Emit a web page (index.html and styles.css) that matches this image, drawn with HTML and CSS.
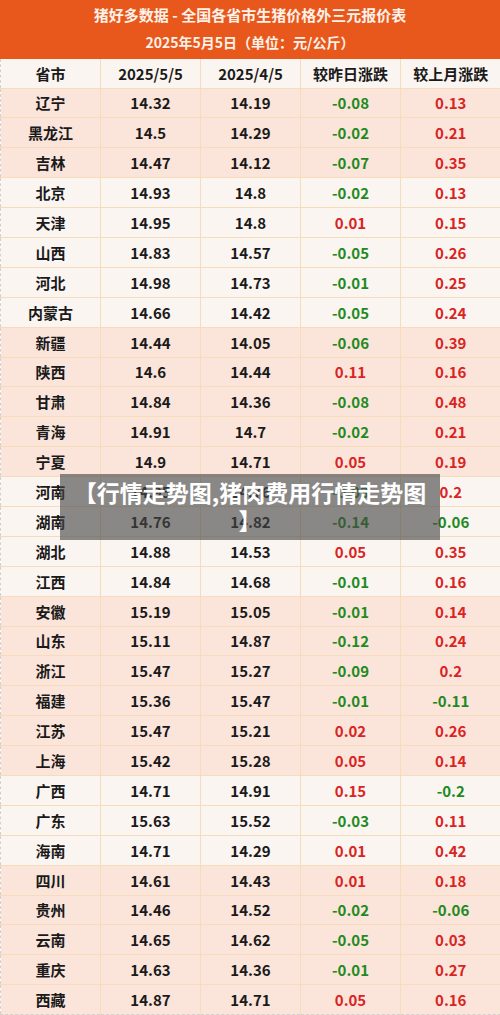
FILE: index.html
```
<!DOCTYPE html>
<html>
<head>
	<title>猪好多数据 - 全国各省市生猪价格外三元报价表</title>
	<meta charset="utf-8">
	<link rel="stylesheet" href="styles.css">
</head>
<body>
	<div class="page">
		<div class="banner">
			<p class="title">猪好多数据 - 全国各省市生猪价格外三元报价表</p>
			<p class="sub">2025年5月5日（单位：元/公斤）</p>
		</div>
		<table class="price">
			<thead>
				<tr><th>省市</th><th>2025/5/5</th><th>2025/4/5</th><th>较昨日涨跌</th><th>较上月涨跌</th></tr>
			</thead>
			<tbody>
				<tr class="pink"><td>辽宁</td><td>14.32</td><td>14.19</td><td class="down">-0.08</td><td class="up">0.13</td></tr>
				<tr class="pink"><td>黑龙江</td><td>14.5</td><td>14.29</td><td class="down">-0.02</td><td class="up">0.21</td></tr>
				<tr class="pink"><td>吉林</td><td>14.47</td><td>14.12</td><td class="down">-0.07</td><td class="up">0.35</td></tr>
				<tr class="pale"><td>北京</td><td>14.93</td><td>14.8</td><td class="down">-0.02</td><td class="up">0.13</td></tr>
				<tr class="pale"><td>天津</td><td>14.95</td><td>14.8</td><td class="up">0.01</td><td class="up">0.15</td></tr>
				<tr class="pale"><td>山西</td><td>14.83</td><td>14.57</td><td class="down">-0.05</td><td class="up">0.26</td></tr>
				<tr class="pale"><td>河北</td><td>14.98</td><td>14.73</td><td class="down">-0.01</td><td class="up">0.25</td></tr>
				<tr class="pale"><td>内蒙古</td><td>14.66</td><td>14.42</td><td class="down">-0.05</td><td class="up">0.24</td></tr>
				<tr class="pink"><td>新疆</td><td>14.44</td><td>14.05</td><td class="down">-0.06</td><td class="up">0.39</td></tr>
				<tr class="pink"><td>陕西</td><td>14.6</td><td>14.44</td><td class="up">0.11</td><td class="up">0.16</td></tr>
				<tr class="pink"><td>甘肃</td><td>14.84</td><td>14.36</td><td class="down">-0.08</td><td class="up">0.48</td></tr>
				<tr class="pink"><td>青海</td><td>14.91</td><td>14.7</td><td class="down">-0.02</td><td class="up">0.21</td></tr>
				<tr class="pink"><td>宁夏</td><td>14.9</td><td>14.71</td><td class="up">0.05</td><td class="up">0.19</td></tr>
				<tr class="pale"><td>河南</td><td>14.95</td><td>14.76</td><td class="down">-0.03</td><td class="up">0.2</td></tr>
				<tr class="pale"><td>湖南</td><td>14.76</td><td>14.82</td><td class="down">-0.14</td><td class="down">-0.06</td></tr>
				<tr class="pale"><td>湖北</td><td>14.88</td><td>14.53</td><td class="up">0.05</td><td class="up">0.35</td></tr>
				<tr class="pale"><td>江西</td><td>14.84</td><td>14.68</td><td class="down">-0.01</td><td class="up">0.16</td></tr>
				<tr class="pink"><td>安徽</td><td>15.19</td><td>15.05</td><td class="down">-0.01</td><td class="up">0.14</td></tr>
				<tr class="pink"><td>山东</td><td>15.11</td><td>14.87</td><td class="down">-0.12</td><td class="up">0.24</td></tr>
				<tr class="pink"><td>浙江</td><td>15.47</td><td>15.27</td><td class="down">-0.09</td><td class="up">0.2</td></tr>
				<tr class="pink"><td>福建</td><td>15.36</td><td>15.47</td><td class="down">-0.01</td><td class="down">-0.11</td></tr>
				<tr class="pink"><td>江苏</td><td>15.47</td><td>15.21</td><td class="up">0.02</td><td class="up">0.26</td></tr>
				<tr class="pink"><td>上海</td><td>15.42</td><td>15.28</td><td class="up">0.05</td><td class="up">0.14</td></tr>
				<tr class="pale"><td>广西</td><td>14.71</td><td>14.91</td><td class="up">0.15</td><td class="down">-0.2</td></tr>
				<tr class="pale"><td>广东</td><td>15.63</td><td>15.52</td><td class="down">-0.03</td><td class="up">0.11</td></tr>
				<tr class="pale"><td>海南</td><td>14.71</td><td>14.29</td><td class="up">0.01</td><td class="up">0.42</td></tr>
				<tr class="pink"><td>四川</td><td>14.61</td><td>14.43</td><td class="up">0.01</td><td class="up">0.18</td></tr>
				<tr class="pink"><td>贵州</td><td>14.46</td><td>14.52</td><td class="down">-0.02</td><td class="down">-0.06</td></tr>
				<tr class="pink"><td>云南</td><td>14.65</td><td>14.62</td><td class="down">-0.05</td><td class="up">0.03</td></tr>
				<tr class="pink"><td>重庆</td><td>14.63</td><td>14.36</td><td class="down">-0.01</td><td class="up">0.27</td></tr>
				<tr class="pink"><td>西藏</td><td>14.87</td><td>14.71</td><td class="up">0.05</td><td class="up">0.16</td></tr>
			</tbody>
		</table>
		<!--图片标题-->
		<div class="caption">【行情走势图,猪肉费用行情走势图<br>】</div>
	</div>
</body>
</html>
```

FILE: styles.css
```
*{
	margin:0;
	padding:0;
	box-sizing:border-box;
}
body{
	background:#fff;
	font-family:"Noto Sans CJK SC","Noto Sans",sans-serif;
	color:#1a1a1a;
}
.page{
	position:relative;
	width:500px;
	height:1015px;
	overflow:hidden;
}
.banner{
	height:59px;
	background:#e8581c;
	color:#fdf1e8;
	font-weight:700;
	text-align:center;
	display:flex;
	flex-direction:column;
	justify-content:space-around;
	padding:2px 0 4px;
}
.banner .title{
	font-size:15px;
	line-height:20px;
}
.banner .sub{
	font-size:14px;
	line-height:20px;
}
.price{
	width:100%;
	border-collapse:collapse;
	table-layout:fixed;
	border-left:1px dashed #d6d0cc;
}
.price th,
.price td{
	width:100px;
	text-align:center;
	font-size:15px;
	font-weight:700;
	border-right:1px solid #f6dcb8;
	border-bottom:1px solid #f6dcb8;
	padding:0;
}
.price th{
	height:29px;
	background:#faf5f0;
}
.price td{
	height:29.9px;
}
.price tr:last-child td{
	border-bottom:1px dashed #d6d0cc;
}
.price th:last-child,
.price td:last-child{
	border-right:none;
}
.pink td{
	background:#fbe5da;
}
.pale td{
	background:#faf5f1;
}
.price .up{
	color:#d92424;
}
.price .down{
	color:#1f8a22;
}
.caption{
	position:absolute;
	left:60px;
	top:474px;
	width:380px;
	height:66px;
	padding:4px 8px;
	background:rgba(70,70,70,0.62);
	color:#fff;
	font-size:23px;
	line-height:28px;
	font-weight:700;
	text-align:center;
}
```
